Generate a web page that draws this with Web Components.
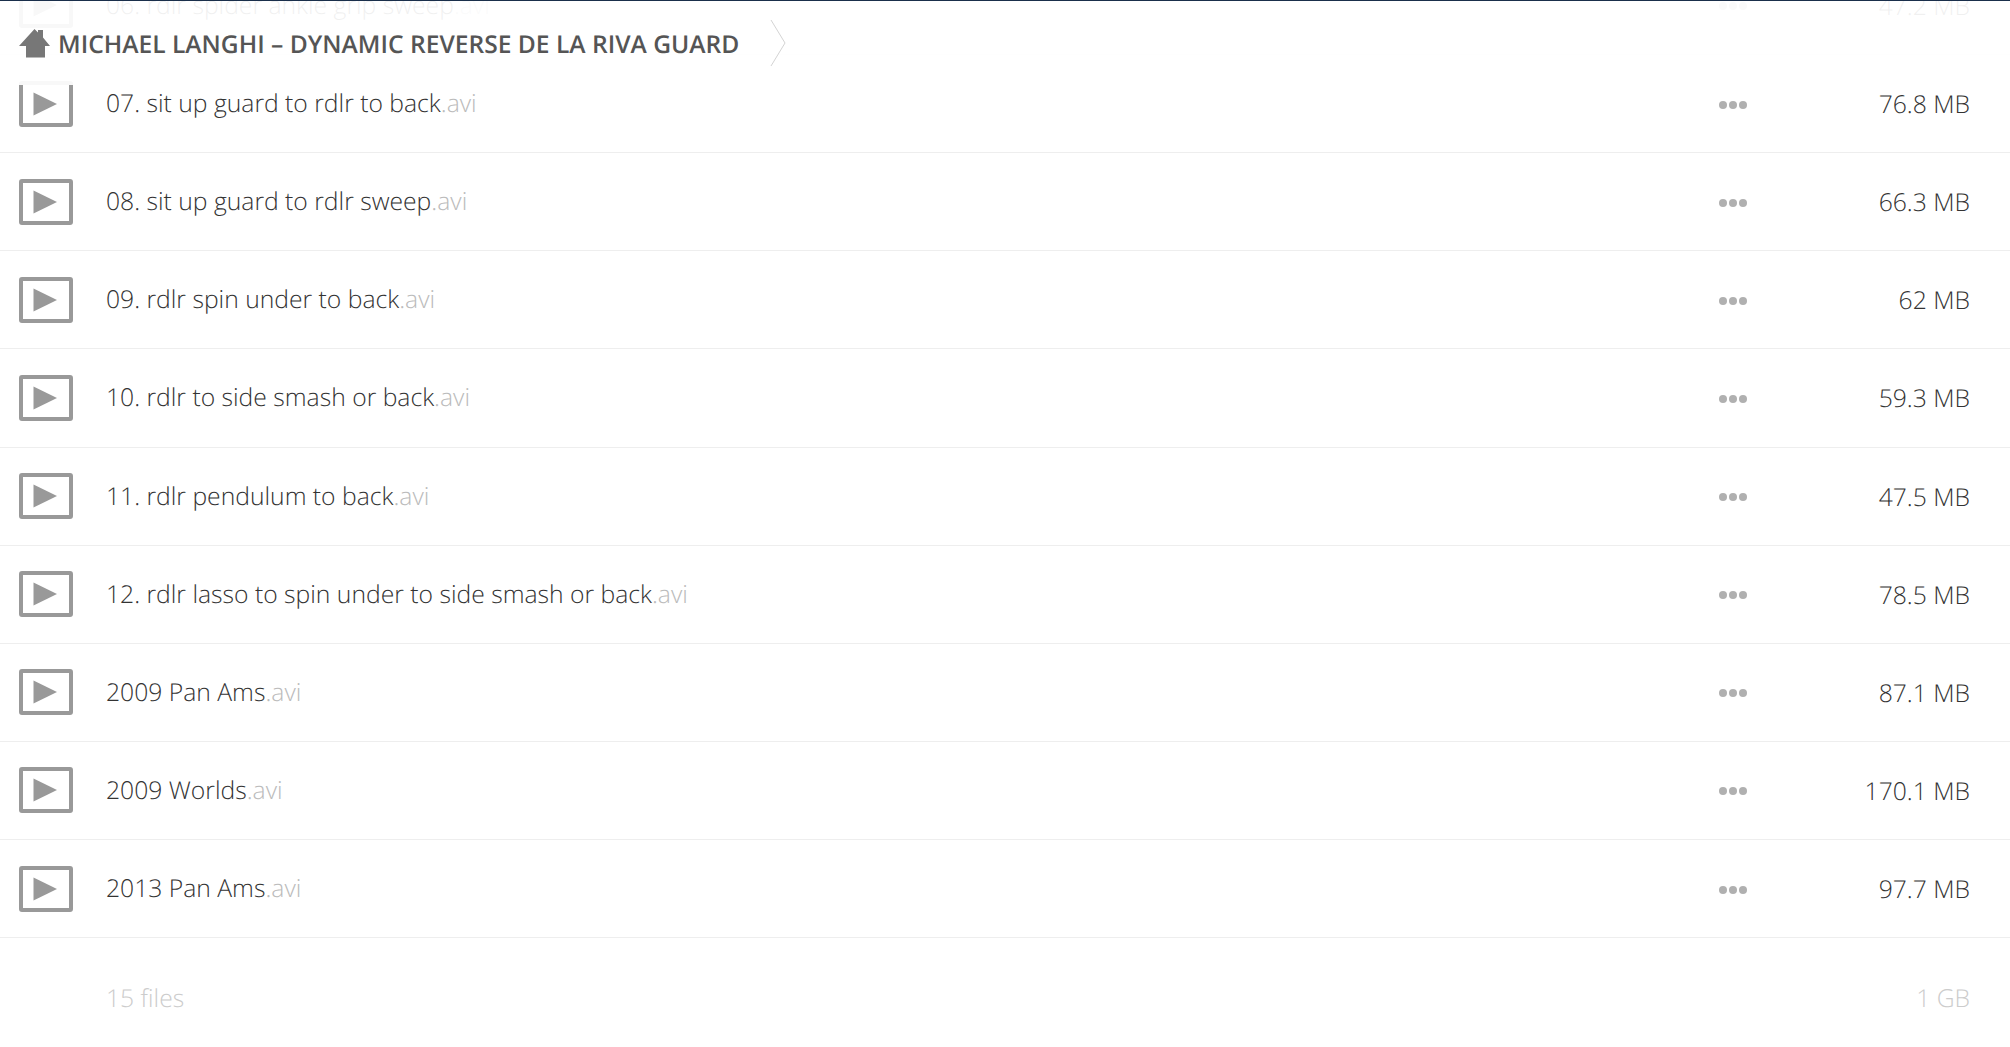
<!DOCTYPE html>
<html>
<head>
<meta charset="utf-8">
<title>Michael Langhi</title>
<style>
    html, body { margin: 0; height: 100%; overflow: hidden; background: #fff; }
    body { font-family: "Open Sans", "Liberation Sans", sans-serif; text-rendering: geometricPrecision; }
</style>
</head>
<body>
<file-browser>
    <crumb-bar slot="bar">MICHAEL LANGHI – DYNAMIC REVERSE DE LA RIVA GUARD</crumb-bar>
    <file-row ext=".avi" size="47.2 MB">06. rdlr spider ankle grip sweep</file-row>
    <file-row ext=".avi" size="76.8 MB">07. sit up guard to rdlr to back</file-row>
    <file-row ext=".avi" size="66.3 MB">08. sit up guard to rdlr sweep</file-row>
    <file-row ext=".avi" size="62 MB">09. rdlr spin under to back</file-row>
    <file-row ext=".avi" size="59.3 MB">10. rdlr to side smash or back</file-row>
    <file-row ext=".avi" size="47.5 MB">11. rdlr pendulum to back</file-row>
    <file-row ext=".avi" size="78.5 MB">12. rdlr lasso to spin under to side smash or back</file-row>
    <file-row ext=".avi" size="87.1 MB">2009 Pan Ams</file-row>
    <file-row ext=".avi" size="170.1 MB">2009 Worlds</file-row>
    <file-row ext=".avi" size="97.7 MB">2013 Pan Ams</file-row>
    <file-summary slot="footer" count="15 files" total="1 GB"></file-summary>
</file-browser>
<script>
class FileBrowser extends HTMLElement {
    constructor() {
        super();
        this.attachShadow({mode: 'open'}).innerHTML = `
        <style>
            :host { display: block; position: relative; height: 100vh; overflow: hidden; }
            .list { margin-top: -43.125px; }
            .bar { position: absolute; top: 0; left: 0; right: 0; }
        </style>
        <div class="list"><slot></slot><slot name="footer"></slot></div>
        <div class="bar"><slot name="bar"></slot></div>`;
    }
}

class CrumbBar extends HTMLElement {
    constructor() {
        super();
        this.attachShadow({mode: 'open'}).innerHTML = `
        <style>
            :host {
                display: flex;
                align-items: center;
                box-sizing: border-box;
                height: 85px;
                padding: 0 0 0 19px;
                border-top: 1px solid #1a2f4b;
                background: rgba(255, 255, 255, .93);
            }
            .home { width: 32px; height: 30px; margin: -1px 7px 0 0; flex: none; }
            .text { font-size: 24.6px; font-weight: 600; color: #555; white-space: nowrap; margin-top: 2px; }
            .chevron { width: 16px; height: 48px; margin: -1px 0 0 31px; flex: none; }
        </style>
        <svg class="home" viewBox="0 0 32 30"><path fill="#777" d="M15.500 1 19 4.500V2h5v7.600l7 8.400h-5v11.500H7V18H0z"/></svg>
        <span class="text"><slot></slot></span>
        <svg class="chevron" viewBox="0 0 16 48"><path fill="none" stroke="#d4d4d4" d="M1 1l14 23L1 47"/></svg>`;
    }
}

class FileRow extends HTMLElement {
    constructor() {
        super();
        this.attachShadow({mode: 'open'}).innerHTML = `
        <style>
            :host {
                display: flex;
                align-items: center;
                box-sizing: border-box;
                height: 98.125px;
                padding: 0 40px 0 19px;
                border-bottom: 1px solid #eee;
                font-size: 24.7px;
                font-weight: 300;
                color: #333;
            }
            .thumb { width: 54px; height: 46px; flex: none; margin-right: 33px; }
            .name { flex: 1; white-space: nowrap; }
            .ext { color: #bbb; }
            .more { display: flex; gap: 2px; margin: 2px 103px 0 0; }
            .more i { width: 8px; height: 8px; border-radius: 50%; background: #b0b0b0; }
            .size { min-width: 120px; text-align: right; margin-top: 2px; }
        </style>
        <svg class="thumb" viewBox="0 0 54 46">
            <rect x="2" y="2" width="50" height="42" rx="1" fill="none" stroke="#999" stroke-width="4"/>
            <path fill="#999" d="M14.500 11.500l23.500 11.500-23.500 11.500z"/>
        </svg>
        <span class="name"><slot></slot><span class="ext"></span></span>
        <span class="more"><i></i><i></i><i></i></span>
        <span class="size"></span>`;
    }

    connectedCallback() {
        this.shadowRoot.querySelector('.ext').textContent = this.getAttribute('ext');
        this.shadowRoot.querySelector('.size').textContent = this.getAttribute('size');
    }
}

class FileSummary extends HTMLElement {
    constructor() {
        super();
        this.attachShadow({mode: 'open'}).innerHTML = `
        <style>
            :host {
                display: flex;
                justify-content: space-between;
                padding: 44px 40px 0 106px;
                font-size: 24.7px;
                font-weight: 300;
                color: #ccc;
            }
        </style>
        <span class="count"></span><span class="total"></span>`;
    }

    connectedCallback() {
        this.shadowRoot.querySelector('.count').textContent = this.getAttribute('count');
        this.shadowRoot.querySelector('.total').textContent = this.getAttribute('total');
    }
}

customElements.define('file-browser', FileBrowser);
customElements.define('crumb-bar', CrumbBar);
customElements.define('file-row', FileRow);
customElements.define('file-summary', FileSummary);
</script>
</body>
</html>
